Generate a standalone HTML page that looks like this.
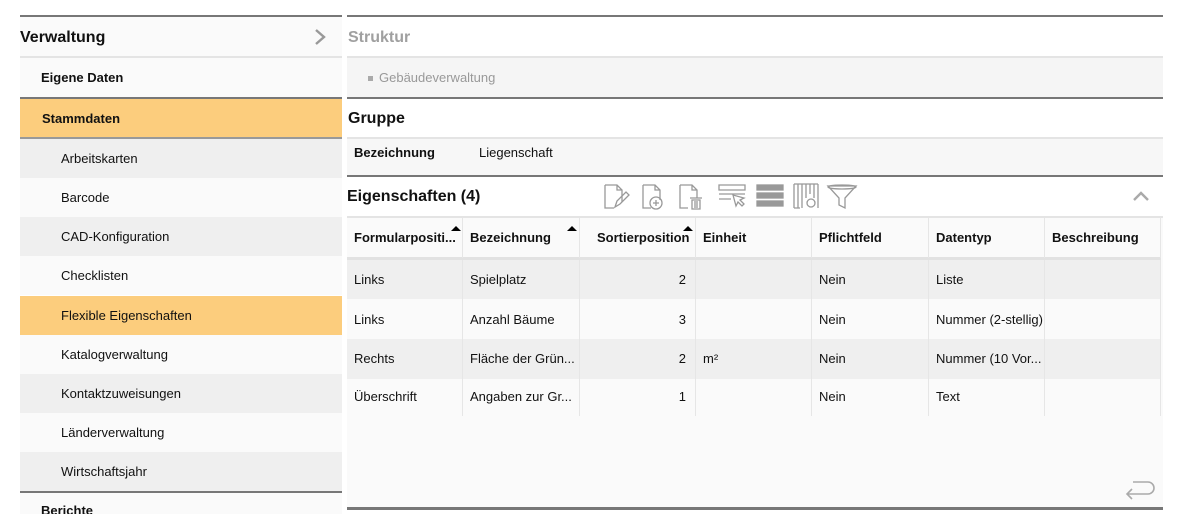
<!DOCTYPE html>
<html style="width:1186px;height:514px;overflow:hidden"><head><meta charset="utf-8">
<style>
*{margin:0;padding:0;box-sizing:border-box}
body{width:1186px;height:514px;overflow:hidden;background:#fff;font-family:"Liberation Sans",Arial,sans-serif;font-size:13px;color:#111;position:relative}
.a{position:absolute}
.it{position:absolute;left:20px;width:322px;height:39px;line-height:39px;padding-left:41px}
.b{font-weight:bold}
.th,.td{position:absolute;height:40px;line-height:40px;padding-left:7px;border-right:1px solid #e6e6e6;white-space:nowrap;overflow:hidden}
.th{font-weight:bold}
</style></head><body>
<!-- left -->
<div class="a" style="left:20px;top:15px;width:322px;height:2px;background:#777"></div>
<div class="a b" style="left:20px;top:17px;width:322px;height:40px;line-height:42px;font-size:16px;background:#fafafa">Verwaltung</div>
<svg class="a" style="left:313px;top:28px" width="14" height="18"><path d="M3 2 L11 9 L3 16" stroke="#999" stroke-width="2.4" fill="none"/></svg>
<div class="a" style="left:20px;top:56px;width:322px;height:2px;background:#e4e4e4"></div>
<div class="it b" style="top:58px;padding-left:21px;background:#fafafa">Eigene Daten</div>
<div class="a" style="left:20px;top:97px;width:322px;height:2px;background:#777"></div>
<div class="it b" style="top:99px;padding-left:22px;background:#fccd7d">Stammdaten</div>
<div class="a" style="left:20px;top:137px;width:322px;height:2px;background:#999"></div>
<div class="it" style="top:139px;background:#efefef">Arbeitskarten</div>
<div class="it" style="top:178px;background:#fafafa">Barcode</div>
<div class="it" style="top:217px;background:#efefef">CAD-Konfiguration</div>
<div class="it" style="top:256px;background:#fafafa">Checklisten</div>
<div class="it" style="top:296px;background:#fccd7d">Flexible Eigenschaften</div>
<div class="it" style="top:335px;background:#fafafa">Katalogverwaltung</div>
<div class="it" style="top:374px;background:#efefef">Kontaktzuweisungen</div>
<div class="it" style="top:413px;background:#fafafa">Länderverwaltung</div>
<div class="it" style="top:452px;height:40px;background:#efefef">Wirtschaftsjahr</div>
<div class="a" style="left:20px;top:491px;width:322px;height:2px;background:#777"></div>
<div class="it b" style="top:493px;height:21px;padding-left:21px;line-height:36px;background:#fafafa;overflow:hidden">Berichte</div>
<!-- right -->
<div class="a" style="left:347px;top:15px;width:816px;height:2px;background:#777"></div>
<div class="a b" style="left:348px;top:17px;width:815px;height:40px;line-height:42px;font-size:16px;color:#a0a0a0">Struktur</div>
<div class="a" style="left:347px;top:56px;width:816px;height:2px;background:#e4e4e4"></div>
<div class="a" style="left:347px;top:58px;width:816px;height:39px;line-height:39px;background:#f5f5f5;color:#999;padding-left:21px"><span style="display:inline-block;width:5px;height:5px;background:#aaa;vertical-align:middle;margin-right:6px"></span>Gebäudeverwaltung</div>
<div class="a" style="left:347px;top:97px;width:816px;height:2px;background:#777"></div>
<div class="a b" style="left:348px;top:99px;height:39px;line-height:40px;font-size:16px">Gruppe</div>
<div class="a" style="left:347px;top:137px;width:816px;height:2px;background:#e4e4e4"></div>
<div class="a" style="left:347px;top:139px;width:816px;height:36px;background:#f7f7f7"></div>
<div class="a b" style="left:354px;top:145px">Bezeichnung</div>
<div class="a" style="left:479px;top:145px">Liegenschaft</div>
<div class="a" style="left:347px;top:175px;width:816px;height:2px;background:#777"></div>
<div class="a b" style="left:347px;top:177px;height:40px;line-height:40px;font-size:16px">Eigenschaften (4)</div>
<svg class="a" style="left:600px;top:182px" width="260" height="30" fill="none" stroke="#999" stroke-width="1.3">
 <path d="M5 3h12l5 5v12M5 3v23h9M17 3v5h5"/><path d="M15 25l2-6 9-9 3 3-9 9z"/>
 <path d="M43 3h12l5 5v10M43 3v23h8M55 3v5h5"/><circle cx="56" cy="21" r="6"/><path d="M53 21h6M56 18v6"/>
 <path d="M80 3h12l5 5v8M80 3v23h8M92 3v5h5"/><path d="M90 16h12M92 18h8v9h-8zM95 19v7M97 19v7"/>
 <path d="M119 3h26v5h-26zM119 12h26M119 17h12"/><path d="M133 13l3 11 2-4 4 4 2-2-4-4 4-2z"/>
 <rect x="157" y="3" width="26" height="5" fill="#999"/><rect x="157" y="11" width="26" height="5" fill="#999"/><rect x="157" y="19" width="26" height="5" fill="#999"/>
 <path d="M194 2v24M198 2v24M202 2v24M206 2v14M210 2v10M214 2v14M218 2v24M194 2h24M194 26h6"/><circle cx="211" cy="21" r="4"/>
 <path d="M228 4h28l-11 12v10l-6-3v-7z"/><ellipse cx="242" cy="5" rx="14" ry="2"/>
</svg>
<svg class="a" style="left:1132px;top:190px" width="18" height="12"><path d="M2 10 L9 3 L16 10" stroke="#aaa" stroke-width="2.4" fill="none"/></svg>
<!-- table -->
<div class="a" style="left:347px;top:217px;width:816px;height:291px;background:#fafafa"></div>
<div class="a" style="left:347px;top:216px;width:816px;height:2px;background:#e4e4e4"></div>
<div class="a" style="left:347px;top:257px;width:814px;height:3px;background:#e2e2e2"></div>
<div class="a" style="left:347px;top:260px;width:814px;height:39px;background:#efefef"></div>
<div class="a" style="left:347px;top:339px;width:814px;height:40px;background:#efefef"></div>
<div class="th" style="left:347px;top:218px;width:116px">Formularpositi...</div>
<div class="th" style="left:463px;top:218px;width:117px">Bezeichnung</div>
<div class="th" style="left:580px;top:218px;width:116px;padding-left:17px">Sortierposition</div>
<div class="th" style="left:696px;top:218px;width:116px">Einheit</div>
<div class="th" style="left:812px;top:218px;width:117px">Pflichtfeld</div>
<div class="th" style="left:929px;top:218px;width:116px">Datentyp</div>
<div class="th" style="left:1045px;top:218px;width:116px">Beschreibung</div>
<svg class="a" style="left:450px;top:226px" width="12" height="6"><path d="M1 5L6 0L11 5z" fill="#000"/></svg>
<svg class="a" style="left:566px;top:226px" width="12" height="6"><path d="M1 5L6 0L11 5z" fill="#000"/></svg>
<svg class="a" style="left:682px;top:226px" width="12" height="6"><path d="M1 5L6 0L11 5z" fill="#000"/></svg>

<div class="td" style="left:347px;top:260px;width:116px">Links</div>
<div class="td" style="left:463px;top:260px;width:117px">Spielplatz</div>
<div class="td" style="left:580px;top:260px;width:116px;text-align:right;padding-right:9px">2</div>
<div class="td" style="left:696px;top:260px;width:116px"></div>
<div class="td" style="left:812px;top:260px;width:117px">Nein</div>
<div class="td" style="left:929px;top:260px;width:116px">Liste</div>
<div class="td" style="left:1045px;top:260px;width:116px"></div>

<div class="td" style="left:347px;top:300px;width:116px">Links</div>
<div class="td" style="left:463px;top:300px;width:117px">Anzahl Bäume</div>
<div class="td" style="left:580px;top:300px;width:116px;text-align:right;padding-right:9px">3</div>
<div class="td" style="left:696px;top:300px;width:116px"></div>
<div class="td" style="left:812px;top:300px;width:117px">Nein</div>
<div class="td" style="left:929px;top:300px;width:116px">Nummer (2-stellig)</div>
<div class="td" style="left:1045px;top:300px;width:116px"></div>

<div class="td" style="left:347px;top:339px;width:116px">Rechts</div>
<div class="td" style="left:463px;top:339px;width:117px">Fläche der Grün...</div>
<div class="td" style="left:580px;top:339px;width:116px;text-align:right;padding-right:9px">2</div>
<div class="td" style="left:696px;top:339px;width:116px">m²</div>
<div class="td" style="left:812px;top:339px;width:117px">Nein</div>
<div class="td" style="left:929px;top:339px;width:116px">Nummer (10 Vor...</div>
<div class="td" style="left:1045px;top:339px;width:116px"></div>

<div class="td" style="left:347px;top:378px;width:116px;height:38px;line-height:38px">Überschrift</div>
<div class="td" style="left:463px;top:378px;width:117px;height:38px;line-height:38px">Angaben zur Gr...</div>
<div class="td" style="left:580px;top:378px;width:116px;height:38px;line-height:38px;text-align:right;padding-right:9px">1</div>
<div class="td" style="left:696px;top:378px;width:116px;height:38px"></div>
<div class="td" style="left:812px;top:378px;width:117px;height:38px;line-height:38px">Nein</div>
<div class="td" style="left:929px;top:378px;width:116px;height:38px;line-height:38px">Text</div>
<div class="td" style="left:1045px;top:378px;width:116px;height:38px"></div>

<svg class="a" style="left:1124px;top:478px" width="32" height="22" fill="none" stroke="#aaa" stroke-width="1.6"><path d="M9 4h15a6 6 0 0 1 0 12H3M8 11l-5 5 5 5"/></svg>
<div class="a" style="left:347px;top:507px;width:816px;height:3px;background:#777"></div>
</body></html>
